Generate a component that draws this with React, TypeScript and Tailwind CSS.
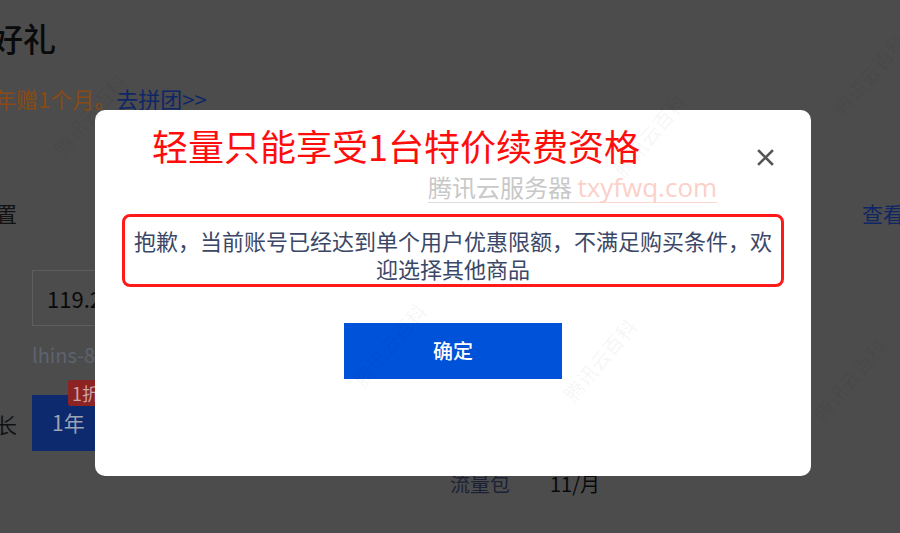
import React from "react";

const font = { fontFamily: '"Noto Sans CJK SC", "Noto Sans", sans-serif' };

function Watermark({ x, y }: { x: number; y: number }) {
  return (
    <div
      className="absolute pointer-events-none text-[20px] font-medium text-black/[0.045] whitespace-nowrap -rotate-[50deg]"
      style={{ left: x, top: y }}
    >
      腾讯云百科
    </div>
  );
}

export default function App() {
  return (
    <div
      className="relative w-[900px] h-[533px] overflow-hidden bg-[#4c4c4c]"
      style={font}
    >
      {/* underlying page (dimmed) */}
      <div className="flex flex-col">
        <div className="ml-[-10px] mt-[16px] text-[33px] leading-[44px] font-medium text-[#0a0a0a] whitespace-nowrap">
          好礼
        </div>
        <div className="ml-[-6px] mt-[24px] text-[22px] leading-[28px] whitespace-nowrap">
          <span className="text-[#8a4a14]">年赠1个月。</span>
          <span className="text-[#0f2666]">去拼团&gt;&gt;</span>
        </div>
        <div className="mt-[88px] flex justify-between text-[21px] leading-[26px]">
          <span className="ml-[-4px] text-[#111]">置</span>
          <span className="mr-[-4px] text-[#0f2666] whitespace-nowrap">查看</span>
        </div>
        <div className="ml-[32px] mt-[44px] w-[300px] h-[56px] border border-[#5e5e5e] flex items-center pl-[14px] text-[22px] text-[#0a0a0a]">
          119.2
        </div>
        <div className="ml-[32px] mt-[16px] text-[20px] leading-[26px] text-[#5d636f]">
          lhins-8
        </div>
        <div className="mt-[27px] flex items-end">
          <span className="ml-[-4px] mb-[14px] text-[21px] leading-[26px] text-[#111]">长</span>
          <div className="relative ml-[15px] w-[90px] h-[56px] bg-[#0e2a6e] flex items-center pl-[20px] text-[21px] text-[#9da4b3]">
            1年
            <div className="absolute left-[36px] top-[-15px] h-[26px] px-[4px] rounded-[3px] bg-[#8e2323] text-[18px] leading-[26px] text-[#c9a5a5] whitespace-nowrap">
              1折
            </div>
          </div>
        </div>
        <div className="mt-[21px] ml-[450px] flex gap-[40px] text-[20px] leading-[24px] whitespace-nowrap">
          <span className="text-[#1b2235]">流量包</span>
          <span className="text-[#0a0a0a]">11/月</span>
        </div>
      </div>

      {/* modal */}
      <div className="absolute left-[95px] top-[110px] w-[716px] h-[366px] bg-white rounded-[10px] flex flex-col">
        <div className="flex items-start justify-between pl-[57px] pr-[37px] pt-[14px]">
          <div className="text-[36px] leading-[43px] text-[#ff0d0d] whitespace-nowrap">
            轻量只能享受1台特价续费资格
          </div>
          <svg className="mt-[25px]" width="17" height="17" viewBox="0 0 17 17">
            <path d="M2 2 L15 15 M15 2 L2 15" stroke="#555" strokeWidth="2.6" strokeLinecap="square" />
          </svg>
        </div>
        <div className="mx-[27px] mt-[47px] h-[73px] border-[3px] border-[#ff1a1a] rounded-[8px] px-[6px] pt-[9px] text-center text-[22px] leading-[28px] text-[#3b4766]">
          抱歉，当前账号已经达到单个用户优惠限额，不满足购买条件，欢迎选择其他商品
        </div>
        <div className="self-center mt-[36px] w-[218px] h-[56px] bg-[#0052d9] flex items-center justify-center text-[20px] font-medium text-white">
          确定
        </div>
      </div>

      {/* site stamp */}
      <div className="absolute left-[428px] top-[172px] flex items-baseline leading-[30px] whitespace-nowrap pointer-events-none">
        <span className="text-[24px] text-[#c8c8c8] border-b border-[#dcdcdc]">腾讯云服务器&nbsp;</span>
        <span className="text-[26px] text-[#fbd0c8] border-b border-[#fbd8d0]" style={{ fontFamily: '"Open Sans", sans-serif' }}>
          txyfwq.com
        </span>
      </div>

      {/* diagonal watermarks */}
      <Watermark x={40} y={100} />
      <Watermark x={340} y={330} />
      <Watermark x={550} y={345} />
      <Watermark x={800} y={365} />
      <Watermark x={820} y={60} />
      <Watermark x={600} y={120} />
    </div>
  );
}
